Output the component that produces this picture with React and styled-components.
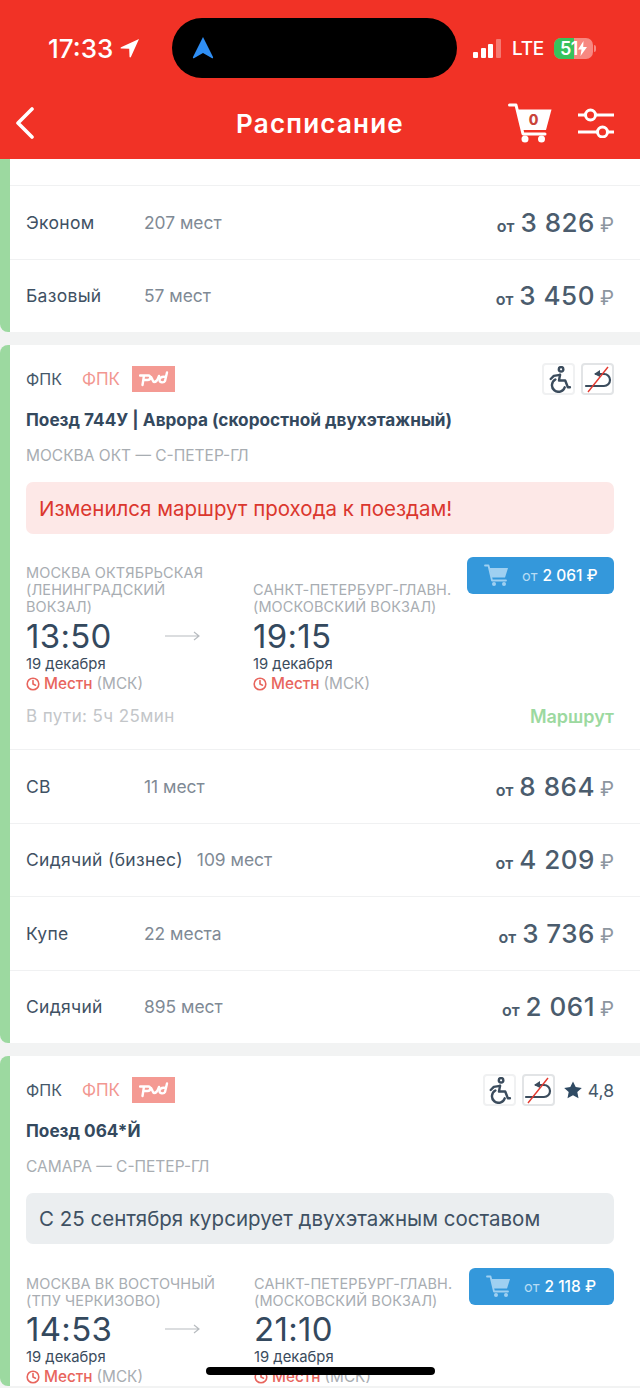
import React from "react";
import styled, { createGlobalStyle } from "styled-components";

const Global = createGlobalStyle`
  html, body { margin: 0; padding: 0; background: #f2f3f3; }
  body { font-family: Inter, "Noto Sans", sans-serif; color: #34495e; }
`;

const Page = styled.div`
  position: relative;
  width: 640px;
  height: 1388px;
  overflow: hidden;
  background: #f2f3f3;
`;

const Header = styled.header`
  height: 159px;
  background: #f13226;
  color: #fff;
  display: flex;
  flex-direction: column;
`;

const StatusBar = styled.div`
  height: 96px;
  display: flex;
  align-items: center;
  padding-left: 48px;
  padding-right: 44px;
  box-sizing: border-box;
`;

const Clock = styled.div`
  font-size: 26px;
  font-weight: 500;
  display: flex;
  align-items: center;
  gap: 6px;
`;

const StatusRight = styled.div`
  margin-left: auto;
  display: flex;
  align-items: center;
`;

const Signal = styled.div`
  display: flex;
  align-items: flex-end;
  gap: 2.6px;
  margin-right: 11px;
`;

const SignalBar = styled.span`
  display: block;
  width: 5px;
  height: ${(p) => p.$h}px;
  border-radius: 1px;
  background: ${(p) => (p.$dim ? "rgba(255,255,255,.35)" : "#fff")};
`;

const Lte = styled.span`
  font-size: 19px;
  font-weight: 500;
  margin-right: 10px;
  letter-spacing: -0.3px;
`;

const Battery = styled.div`
  position: relative;
  width: 39px;
  height: 21px;
  border-radius: 7px;
  overflow: hidden;
  background: rgba(255, 255, 255, 0.42);
  font-size: 18px;
  font-weight: 600;
  line-height: 21px;
  display: flex;
  align-items: center;
`;

const BatteryFill = styled.span`
  position: absolute;
  left: 0;
  top: 0;
  bottom: 0;
  width: 20px;
  background: #37c25c;
`;

const BatteryText = styled.span`
  position: relative;
  margin-left: 6px;
  letter-spacing: -0.5px;
`;

const BatteryBolt = styled.svg`
  position: relative;
  margin-left: 0;
`;

const BatteryNub = styled.span`
  width: 2px;
  height: 7px;
  margin-left: 1px;
  border-radius: 0 2px 2px 0;
  background: rgba(255, 255, 255, 0.42);
`;

const NavBar = styled.div`
  flex: 1;
  position: relative;
  display: flex;
  align-items: center;
  padding: 0 26px 9px 15px;
`;

const NavTitle = styled.h1`
  margin: 0;
  position: absolute;
  left: 0;
  right: 0;
  top: 0;
  bottom: 9px;
  display: flex;
  align-items: center;
  justify-content: center;
  font-size: 26px;
  font-weight: 600;
  letter-spacing: 1.2px;
  pointer-events: none;
`;

const NavIcons = styled.div`
  margin-left: auto;
  display: flex;
  align-items: center;
  gap: 26px;
`;

const Island = styled.div`
  position: absolute;
  left: 172px;
  top: 18px;
  width: 285px;
  height: 60px;
  border-radius: 30px;
  background: #000;
  display: flex;
  align-items: center;
  padding-left: 20px;
  box-sizing: border-box;
`;

const HomeBar = styled.div`
  position: absolute;
  left: 206px;
  top: 1367px;
  width: 229px;
  height: 8px;
  border-radius: 4px;
  background: #000;
`;

const Card = styled.section`
  background: #fff;
  border-left: 10px solid #9cd9a0;
  border-radius: 8px 0 0 8px;
  margin-bottom: 13px;
  &:first-of-type {
    border-radius: 0 0 0 8px;
  }
`;

const TopStub = styled.div`
  height: 26px;
`;

const Inner = styled.div`
  padding: 18px 26px 0 16px;
`;

const TopRow = styled.div`
  display: flex;
  align-items: center;
  height: 32px;
`;

const Carrier = styled.span`
  font-size: ${(p) => (p.$pink ? "17px" : "16px")};
  color: ${(p) => (p.$pink ? "#f29791" : "#46586a")};
  margin-right: ${(p) => (p.$pink ? "12px" : "20px")};
`;

const LogoBox = styled.div`
  width: 43px;
  height: 26px;
  background: #f49a93;
  display: flex;
  align-items: center;
  justify-content: center;
`;

const Features = styled.div`
  margin-left: auto;
  display: flex;
  align-items: center;
  gap: 6px;
`;

const Feature = styled.div`
  width: 33px;
  height: 32px;
  box-sizing: border-box;
  border: 2px solid ${(p) => (p.$strong ? "#e2e4e6" : "#f0f1f2")};
  border-radius: 4px;
  display: flex;
  align-items: center;
  justify-content: center;
`;

const Rating = styled.div`
  display: flex;
  align-items: center;
  gap: 5px;
  margin-left: 2px;
  font-size: 17.5px;
  color: #46586a;
`;

const Title = styled.div`
  margin-top: 13px;
  font-size: 17.2px;
  line-height: 24px;
  font-weight: 700;
  color: #34495e;
`;

const RouteLine = styled.div`
  margin-top: 13px;
  font-size: 15.5px;
  line-height: 22px;
  color: #a8adb2;
`;

const Notice = styled.div`
  margin-top: 15px;
  height: ${(p) => (p.$tone === "red" ? 52 : 51)}px;
  border-radius: 7px;
  background: ${(p) => (p.$tone === "red" ? "#fde8e7" : "#ebeef0")};
  color: ${(p) => (p.$tone === "red" ? "#db372e" : "#3f5163")};
  font-size: 20.5px;
  display: flex;
  align-items: center;
  padding-left: 13px;
`;

const Journey = styled.div`
  position: relative;
  display: flex;
  align-items: flex-start;
  margin-top: ${(p) => p.$top}px;
`;

const Stop = styled.div`
  width: ${(p) => p.$w}px;
  padding-top: ${(p) => p.$pad || 0}px;
`;

const Station = styled.div`
  font-size: 14.5px;
  line-height: 17px;
  color: #a8adb2;
  white-space: pre-line;
  letter-spacing: 0.1px;
`;

const TimeRow = styled.div`
  display: flex;
  align-items: center;
  height: 40px;
  margin-top: ${(p) => (p.$tight ? 0 : 1)}px;
`;

const Time = styled.div`
  font-size: 33px;
  color: #34495e;
  letter-spacing: 0.3px;
  width: 139px;
`;

const DateLine = styled.div`
  margin-top: -1px;
  font-size: 14.8px;
  line-height: 19px;
  color: #3b4c5d;
`;

const LocalLine = styled.div`
  font-size: 15.3px;
  line-height: 19px;
  display: flex;
  align-items: center;
  gap: 4px;
  color: #a8adb2;
`;

const LocalRed = styled.span`
  color: #e8655d;
  font-weight: 500;
`;

const BuyButton = styled.div`
  position: absolute;
  right: 0;
  top: 0;
  width: ${(p) => p.$w}px;
  height: 37px;
  box-sizing: border-box;
  border-radius: 6px;
  background: #3498db;
  display: flex;
  align-items: center;
  padding-left: 17px;
  color: #fff;
  font-size: 15.5px;
  font-weight: 500;
`;

const BuyFrom = styled.span`
  margin-left: 13px;
  margin-right: 5px;
  font-weight: 400;
  font-size: 14.5px;
  color: #b7dcf4;
`;

const TravelRow = styled.div`
  display: flex;
  justify-content: space-between;
  align-items: center;
  height: 22px;
  margin-top: 12px;
  padding-bottom: 22px;
  font-size: 17px;
  letter-spacing: 0.4px;
  color: #c3c6c9;
`;

const RouteLink = styled.span`
  color: #9cd9a0;
  font-weight: 600;
  font-size: 18px;
  letter-spacing: 0;
`;

const FareRow = styled.div`
  height: 73.5px;
  box-sizing: border-box;
  border-top: 1px solid #f0f1f2;
  padding: 0 26px 0 16px;
  display: flex;
  align-items: center;
`;

const FareClass = styled.span`
  min-width: 118px;
  font-size: 17.5px;
  letter-spacing: 0.3px;
  color: #3f5163;
  margin-right: ${(p) => (p.$long ? "14px" : "0")};
`;

const FareSeats = styled.span`
  font-size: 17.4px;
  color: #7f8a95;
`;

const FarePrice = styled.span`
  margin-left: auto;
  display: flex;
  align-items: baseline;
  color: #4b5c6d;
`;

const FareFrom = styled.span`
  font-size: 16px;
  font-weight: 600;
  margin-right: 6px;
`;

const FareValue = styled.span`
  font-size: 26px;
  font-weight: 500;
  letter-spacing: 0.5px;
`;

const FareRub = styled.span`
  margin-left: 5px;
  font-size: 20px;
  color: #8d969f;
`;

const LocationArrow = ({ color = "#fff", size = 22 }) => (
  <svg width={size} height={size} viewBox="0 0 22 22">
    <path d="M20 2 2 10.200c-.7.4-.5 1.400.3 1.400l7.900.2.3 7.900c0 .8 1 1 1.400.3z" fill={color} />
  </svg>
);

const CartIcon = () => (
  <svg width="44" height="40" viewBox="0 0 44 40">
    <path d="M1.500 2h6.500l7 29h22" fill="none" stroke="#fff" strokeWidth="3" strokeLinecap="round" strokeLinejoin="round" />
    <path d="M9 6.500h34.500L38 27H14z" fill="#fff" />
    <circle cx="17" cy="36" r="3.500" fill="#fff" />
    <circle cx="33.500" cy="36" r="3.500" fill="#fff" />
    <text x="25.500" y="22" textAnchor="middle" fontFamily="Inter, sans-serif" fontSize="14" fontWeight="800" fill="#c9443a">0</text>
  </svg>
);

const SliderIcon = () => (
  <svg width="36" height="30" viewBox="0 0 36 30" fill="none" stroke="#fff" strokeWidth="3">
    <path d="M0 7h7M18 7h18M0 24h19M30 24h6" strokeLinecap="round" />
    <circle cx="12.500" cy="7" r="5" />
    <circle cx="24.500" cy="24" r="5" />
  </svg>
);

const BackIcon = () => (
  <svg width="20" height="32" viewBox="0 0 20 32" fill="none" stroke="#fff" strokeWidth="3.600" strokeLinecap="round" strokeLinejoin="round">
    <path d="M17 2 3 16l14 14" />
  </svg>
);

const RzdLogo = () => (
  <svg width="30" height="16" viewBox="0 0 30 16" fill="none" stroke="#fff" strokeWidth="2.400" strokeLinecap="round" strokeLinejoin="round">
    <path d="M1 4.500h8.500c2.500 0 2.500 4.500-1 4.500H5M5 4.500 3.500 14" />
    <path d="M12 6c2 3 2 5 3 5 3 0 4-3 5-6" />
    <path d="M28 1.500 26 10c-1 2-6 2-5.500-1.500C21 6 24 5.500 27 6" />
  </svg>
);

const WheelchairIcon = () => (
  <svg width="26" height="27" viewBox="0 0 24 26" fill="none" stroke="#3b4c5d" strokeWidth="2.300" strokeLinecap="round" strokeLinejoin="round">
    <circle cx="14" cy="3.200" r="2.200" />
    <path d="M13 8.500 7 9.500 4 12.500" />
    <path d="M13 8.500 12 14h6l2.500 6.500h2" />
    <path d="M8.500 13a6.300 6.300 0 1 0 9 7.500" />
  </svg>
);

const NoTurnIcon = () => (
  <svg width="28" height="28" viewBox="0 0 28 28" fill="none">
    <path d="M2 21h18a6 6 0 0 0 0-12H12" stroke="#3b4c5d" strokeWidth="2.200" strokeLinecap="round" />
    <path d="M16 5l-6 4 6 3z" fill="#3b4c5d" />
    <path d="M4 27 24 2" stroke="#e3382e" strokeWidth="1.400" />
  </svg>
);

const StarIcon = () => (
  <svg width="20" height="20" viewBox="0 0 20 20">
    <path d="M10 1.500l2.700 5.600 6.100.8-4.500 4.200 1.200 6.100-5.500-3-5.500 3 1.200-6.100L1.200 7.900l6.100-.8z" fill="#2f4a63" />
  </svg>
);

const ClockIcon = () => (
  <svg width="14" height="14" viewBox="0 0 14 14" fill="none" stroke="#e8655d" strokeWidth="1.600">
    <circle cx="7" cy="7" r="5.800" />
    <path d="M7 3.500V7l2.500 1.200" strokeLinecap="round" />
  </svg>
);

const ThinArrow = () => (
  <svg width="35" height="12" viewBox="0 0 35 12" fill="none" stroke="#b8bcc0" strokeWidth="1.200">
    <path d="M0 6h34M29 2l5 4-5 4" />
  </svg>
);

const SmallCart = () => (
  <svg width="25" height="23" viewBox="0 0 25 23">
    <path d="M1 1.500h3.500L8 16.500h14" fill="none" stroke="#9fd0f1" strokeWidth="1.800" strokeLinecap="round" strokeLinejoin="round" />
    <path d="M5.500 4h18.500l-3 9.500H7.500z" fill="#9fd0f1" />
    <circle cx="10" cy="20" r="2" fill="#9fd0f1" />
    <circle cx="20" cy="20" r="2" fill="#9fd0f1" />
  </svg>
);

const Fare = ({ name, seats, price, long }) => (
  <FareRow>
    <FareClass $long={long}>{name}</FareClass>
    <FareSeats>{seats}</FareSeats>
    <FarePrice>
      <FareFrom>от</FareFrom>
      <FareValue>{price}</FareValue>
      <FareRub>₽</FareRub>
    </FarePrice>
  </FareRow>
);

const StopBlock = ({ w, pad, station, time, arrow, tight }) => (
  <Stop $w={w} $pad={pad}>
    <Station>{station}</Station>
    <TimeRow $tight={tight}>
      <Time>{time}</Time>
      {arrow && <ThinArrow />}
    </TimeRow>
    <DateLine>19 декабря</DateLine>
    <LocalLine>
      <ClockIcon />
      <LocalRed>Местн</LocalRed> (МСК)
    </LocalLine>
  </Stop>
);

const CardTop = ({ rating }) => (
  <TopRow>
    <Carrier>ФПК</Carrier>
    <Carrier $pink>ФПК</Carrier>
    <LogoBox>
      <RzdLogo />
    </LogoBox>
    <Features>
      <Feature>
        <WheelchairIcon />
      </Feature>
      <Feature $strong>
        <NoTurnIcon />
      </Feature>
      {rating && (
        <Rating>
          <StarIcon />
          {rating}
        </Rating>
      )}
    </Features>
  </TopRow>
);

export default function App() {
  return (
    <Page>
      <Global />
      <Header>
        <StatusBar>
          <Clock>
            17:33
            <LocationArrow />
          </Clock>
          <StatusRight>
            <Signal>
              <SignalBar $h={6} />
              <SignalBar $h={10} />
              <SignalBar $h={14} />
              <SignalBar $h={19} $dim />
            </Signal>
            <Lte>LTE</Lte>
            <Battery>
              <BatteryFill />
              <BatteryText>51</BatteryText>
              <BatteryBolt width="9" height="15" viewBox="0 0 9 15">
                <path d="M5.500 0 0 8.500h3.500L2.500 15 9 6H5.200z" fill="#fff" />
              </BatteryBolt>
            </Battery>
            <BatteryNub />
          </StatusRight>
        </StatusBar>
        <NavBar>
          <BackIcon />
          <NavTitle>Расписание</NavTitle>
          <NavIcons>
            <CartIcon />
            <SliderIcon />
          </NavIcons>
        </NavBar>
      </Header>
      <Island>
        <svg width="22" height="24" viewBox="0 0 22 24">
          <path d="M11 1 1 21c-.4 1 .5 1.600 1.300 1L11 17l8.700 5c.8.600 1.700 0 1.300-1z" fill="#2f8ff5" />
        </svg>
      </Island>

      <Card>
        <TopStub />
        <Fare name="Эконом" seats="207 мест" price="3 826" />
        <Fare name="Базовый" seats="57 мест" price="3 450" />
      </Card>

      <Card>
        <Inner>
          <CardTop />
          <Title>Поезд 744У | Аврора (скоростной двухэтажный)</Title>
          <RouteLine>МОСКВА ОКТ — С-ПЕТЕР-ГЛ</RouteLine>
          <Notice $tone="red">Изменился маршрут прохода к поездам!</Notice>
          <Journey $top={23}>
            <StopBlock
              w={227}
              pad={7}
              station={"МОСКВА ОКТЯБРЬСКАЯ\n(ЛЕНИНГРАДСКИЙ\nВОКЗАЛ)"}
              time="13:50"
              arrow
            />
            <StopBlock
              w={210}
              pad={24}
              station={"САНКТ-ПЕТЕРБУРГ-ГЛАВН.\n(МОСКОВСКИЙ ВОКЗАЛ)"}
              time="19:15"
            />
            <BuyButton $w={147}>
              <SmallCart />
              <BuyFrom>от</BuyFrom>2 061 ₽
            </BuyButton>
          </Journey>
          <TravelRow>
            <span>В пути: 5ч 25мин</span>
            <RouteLink>Маршрут</RouteLink>
          </TravelRow>
        </Inner>
        <Fare name="СВ" seats="11 мест" price="8 864" />
        <Fare name="Сидячий (бизнес)" seats="109 мест" price="4 209" long />
        <Fare name="Купе" seats="22 места" price="3 736" />
        <Fare name="Сидячий" seats="895 мест" price="2 061" />
      </Card>

      <Card>
        <Inner>
          <CardTop rating="4,8" />
          <Title>Поезд 064*Й</Title>
          <RouteLine>САМАРА — С-ПЕТЕР-ГЛ</RouteLine>
          <Notice>С 25 сентября курсирует двухэтажным составом</Notice>
          <Journey $top={24}>
            <StopBlock
              w={228}
              pad={7}
              station={"МОСКВА ВК ВОСТОЧНЫЙ\n(ТПУ ЧЕРКИЗОВО)"}
              time="14:53"
              arrow
              tight
            />
            <StopBlock
              w={210}
              pad={7}
              station={"САНКТ-ПЕТЕРБУРГ-ГЛАВН.\n(МОСКОВСКИЙ ВОКЗАЛ)"}
              time="21:10"
              tight
            />
            <BuyButton $w={145}>
              <SmallCart />
              <BuyFrom>от</BuyFrom>2 118 ₽
            </BuyButton>
          </Journey>
        </Inner>
      </Card>

      <HomeBar />
    </Page>
  );
}
